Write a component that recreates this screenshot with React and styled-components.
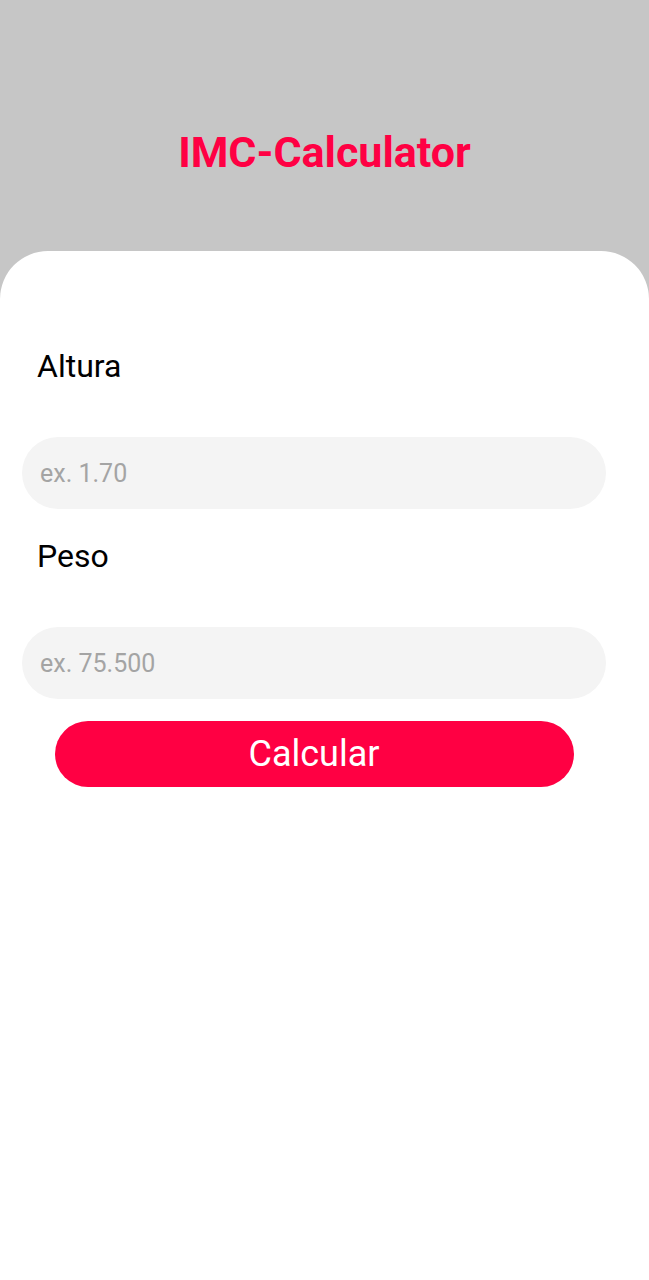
import { useState } from "react";
import styled, { createGlobalStyle } from "styled-components";

const GlobalStyle = createGlobalStyle`
  html, body {
    margin: 0;
    padding: 0;
    background: #ffffff;
  }
  body {
    font-family: Roboto, "Liberation Sans", Arial, sans-serif;
  }
  * {
    box-sizing: border-box;
  }`

const Screen = styled.div`
  min-height: 1280px;
  display: flex;
  flex-direction: column;
  background: #c6c6c6;`

const Header = styled.header`
  height: 251px;
  padding-top: 126px;
  display: flex;
  justify-content: center;`

const Title = styled.h1`
  margin: 0;
  font-size: 43px;
  line-height: 52px;
  font-weight: 700;
  color: #ff0043;`

const Card = styled.main`
  flex: 1;
  background: #ffffff;
  border-radius: 48px 48px 0 0;
  padding: 97px 43px 0 22px;`

const Form = styled.form`
  display: flex;
  flex-direction: column;
  gap: 29px;`

const Field = styled.div`
  display: flex;
  flex-direction: column;
  gap: 53px;`

const Label = styled.label`
  padding-left: 15px;
  font-size: 32px;
  line-height: 36px;
  color: #000000;`

const Input = styled.input`
  width: 100%;
  height: 72px;
  border: none;
  outline: none;
  border-radius: 36px;
  background: #f4f4f4;
  padding: 0 18px;
  font-family: inherit;
  font-size: 25px;
  color: #222;

  &::placeholder {
    color: #a4a4a4;
  }`

const Button = styled.button`
  align-self: center;
  width: 519px;
  height: 66px;
  margin-top: -7px;
  border: none;
  border-radius: 33px;
  background: #ff0043;
  color: #ffffff;
  font-family: inherit;
  font-size: 36px;
  cursor: pointer;`

export default function App() {
    const [height, setHeight] = useState("");
    const [weight, setWeight] = useState("");

    const handleSubmit = (event) => {
        event.preventDefault();
    };

    return (
        <>
            <GlobalStyle />
            <Screen>
                <Header>
                    <Title>IMC-Calculator</Title>
                </Header>
                <Card>
                    <Form onSubmit={handleSubmit}>
                        <Field>
                            <Label htmlFor="altura">Altura</Label>
                            <Input
                                id="altura"
                                placeholder="ex. 1.70"
                                value={height}
                                onChange={(e) => setHeight(e.target.value)}
                            />
                        </Field>
                        <Field>
                            <Label htmlFor="peso">Peso</Label>
                            <Input
                                id="peso"
                                placeholder="ex. 75.500"
                                value={weight}
                                onChange={(e) => setWeight(e.target.value)}
                            />
                        </Field>
                        <Button type="submit">Calcular</Button>
                    </Form>
                </Card>
            </Screen>
        </>
    );
}
